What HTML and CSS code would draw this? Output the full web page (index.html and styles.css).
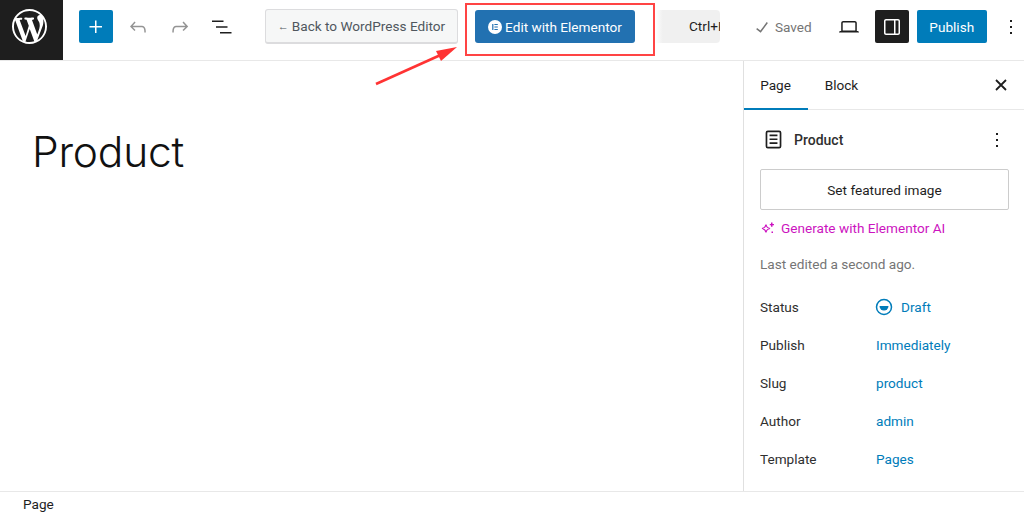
FILE: index.html
```html
<!DOCTYPE html>
<html lang="en">
<head>
<meta charset="utf-8">
<title>Product</title>
<link rel="stylesheet" href="styles.css">
</head>
<body>
<div class="app">
  <header class="topbar">
    <a class="wp-logo"><svg width="35" height="35" viewBox="0 0 20 20"><path fill="#fff" d="M20 10c0-5.51-4.49-10-10-10C4.48 0 0 4.49 0 10c0 5.52 4.48 10 10 10 5.51 0 10-4.48 10-10zM7.78 15.37L4.37 6.22c.55-.02 1.17-.08 1.17-.08.5-.06.44-1.13-.06-1.11 0 0-1.45.11-2.37.11-.18 0-.37 0-.58-.01C4.12 2.69 6.87 1.11 10 1.11c2.33 0 4.45.87 6.05 2.34-.68-.11-1.65.39-1.65 1.58 0 .74.45 1.36.9 2.1.35.61.55 1.36.55 2.46 0 1.49-1.4 5-1.4 5l-3.03-8.37c.54-.02.82-.17.82-.17.5-.05.44-1.25-.06-1.22 0 0-1.44.12-2.38.12-.87 0-2.33-.12-2.33-.12-.5-.03-.56 1.2-.06 1.22l.92.08 1.26 3.41zM17.41 10c.24-.64.74-1.87.43-4.25.7 1.29 1.05 2.71 1.05 4.25 0 3.29-1.73 6.24-4.4 7.78.97-2.59 1.94-5.2 2.92-7.78zM6.1 18.09C3.12 16.65 1.11 13.53 1.11 10c0-1.3.23-2.48.72-3.59C3.25 10.3 4.67 14.2 6.1 18.09zm4.03-6.63l2.58 6.98c-.86.29-1.76.45-2.71.45-.79 0-1.57-.11-2.29-.33.81-2.38 1.62-4.74 2.42-7.1z"/></svg></a>
    <button class="btn-add"><svg width="24" height="24" viewBox="0 0 24 24"><path fill="#fff" d="M11 12.5V18h1.5v-5.5H18V11h-5.5V5.5H11V11H5.5v1.5z"/></svg></button>
    <span class="icon-slot undo"><svg width="24" height="24" viewBox="0 0 24 24"><path fill="#949494" d="M18.3 11.7c-.6-.6-1.4-.9-2.3-.9H6.7l2.9-3.3-1.1-1-4.5 5L8.5 16l1-1-2.7-2.7H16c.5 0 .9.2 1.3.5 1 1 1 3.4 1 4.5v.3h1.5v-.2c0-1.5 0-4.3-1.5-5.7z"/></svg></span>
    <span class="icon-slot redo"><svg width="24" height="24" viewBox="0 0 24 24"><path fill="#949494" d="M15.6 6.5l-1.1 1 2.9 3.3H8c-.9 0-1.7.3-2.3.9-1.4 1.5-1.4 4.2-1.4 5.6v.2h1.5v-.3c0-1.1 0-3.5 1-4.5.3-.3.7-.5 1.3-.5h9.2L14.5 15l1.1 1.1 4.6-4.6-4.6-5z"/></svg></span>
    <span class="icon-slot list"><svg width="24" height="24" viewBox="0 0 24 24"><path fill="#1e1e1e" d="M2 5.500h11.500V7H2zM6 11.300h11.500v1.500H6zM10 17h11.500v1.500H10z"/></svg></span>
    <a class="btn-back"><span class="back-arrow">←</span>Back to WordPress Editor</a>
    <a class="btn-elementor"><svg width="14" height="14" viewBox="0 0 14 14"><circle cx="7" cy="7" r="7" fill="#fff"/><path fill="#2271b1" d="M4.200 3.900h1.200v6.200H4.200zM6.400 3.900h3.400v1.200H6.400zM6.400 6.400h3.400v1.200H6.400zM6.400 8.900h3.400v1.200H6.400z"/></svg>Edit with Elementor</a>
    <div class="shortcut"><span>Ctrl+K</span></div>
    <span class="saved"><svg width="24" height="24" viewBox="0 0 24 24"><path fill="#757575" d="M16.700 7.100l-6.300 8.500-3.300-2.500-.9 1.200 4.500 3.400L17.900 8z"/></svg>Saved</span>
    <span class="icon-slot device"><svg width="24" height="24" viewBox="0 0 24 24"><path fill="#1e1e1e" d="M20.500 16h-.7V8c0-1.100-.9-2-2-2H6.200c-1.100 0-2 .9-2 2v8h-.7c-.8 0-1.500.7-1.500 1.500h20c0-.8-.7-1.500-1.500-1.500zM5.700 8c0-.3.2-.5.5-.5h11.600c.3 0 .5.2.5.5v7.600H5.700V8z"/></svg></span>
    <button class="btn-toggle"><svg width="24" height="24" viewBox="0 0 24 24"><path fill="#fff" d="M18 4H6c-1.100 0-2 .9-2 2v12c0 1.100.9 2 2 2h12c1.100 0 2-.9 2-2V6c0-1.100-.9-2-2-2zm-4 14.500H6c-.3 0-.5-.2-.5-.5V6c0-.3.2-.5.5-.5h8v13zm4.500-.5c0 .3-.2.5-.5.5h-2.500v-13H18c.3 0 .5.2.5.500v12z"/></svg></button>
    <button class="btn-publish">Publish</button>
    <span class="icon-slot more"><svg width="24" height="24" viewBox="0 0 24 24"><path fill="#1e1e1e" d="M13 19h-2v-2h2v2zm0-6h-2v-2h2v2zm0-6h-2V5h2v2z"/></svg></span>
  </header>

  <div class="workspace">
    <main class="canvas">
      <h1 class="post-title">Product</h1>
    </main>
    <aside class="sidebar">
      <div class="tabs">
        <span class="tab is-active">Page</span>
        <span class="tab">Block</span>
        <svg class="tab-close" width="24" height="24" viewBox="0 0 24 24"><path fill="none" stroke="#1e1e1e" stroke-width="1.800" d="M7 7l10 10M17 7L7 17"/></svg>
      </div>
      <div class="panel">
        <div class="doc-row">
          <svg width="27" height="27" viewBox="0 0 24 24"><path fill="#1e1e1e" d="M15.500 7.500h-7V9h7V7.500zm-7 3.500h7v1.500h-7V11zm7 3.500h-7V16h7v-1.500z"/><path fill="#1e1e1e" fill-rule="evenodd" d="M17 4H7a2 2 0 0 0-2 2v12a2 2 0 0 0 2 2h10a2 2 0 0 0 2-2V6a2 2 0 0 0-2-2zM7 5.500h10c.3 0 .5.2.5.5v12c0 .3-.2.5-.5.5H7a.5.5 0 0 1-.5-.5V6c0-.3.2-.5.5-.5z"/></svg>
          <span class="doc-name">Product</span>
          <svg class="doc-more" width="24" height="24" viewBox="0 0 24 24"><path fill="#1e1e1e" d="M13 19h-2v-2h2v2zm0-6h-2v-2h2v2zm0-6h-2V5h2v2z"/></svg>
        </div>
        <button class="btn-featured">Set featured image</button>
        <a class="ai-link"><svg width="15" height="15" viewBox="0 0 15 15"><path fill="none" stroke="#cc14c0" stroke-width="1.200" d="M6 3.500C6.400 6 7.500 7.100 10 7.500 7.500 7.900 6.400 9 6 11.500 5.600 9 4.500 7.900 2 7.500 4.500 7.100 5.600 6 6 3.500z"/><path fill="#cc14c0" d="M11 1.500h1.500V3H14v1.200h-1.500v1.500H11V4.200H9.800V3H11zM11.500 10.500h1.500V12h-1.500z"/></svg>Generate with Elementor AI</a>
        <p class="edited">Last edited a second ago.</p>
        <dl class="meta">
          <div class="meta-row"><dt>Status</dt><dd class="status"><svg width="18" height="18" viewBox="0 0 18 18"><circle cx="9" cy="9" r="7.500" fill="none" stroke="#007cba" stroke-width="1.500"/><path fill="#007cba" d="M4.500 8h9a4.500 4.500 0 0 1-9 0z"/></svg>Draft</dd></div>
          <div class="meta-row"><dt>Publish</dt><dd>Immediately</dd></div>
          <div class="meta-row"><dt>Slug</dt><dd>product</dd></div>
          <div class="meta-row"><dt>Author</dt><dd>admin</dd></div>
          <div class="meta-row"><dt>Template</dt><dd>Pages</dd></div>
        </dl>
      </div>
    </aside>
  </div>

  <footer class="statusbar">Page</footer>

  <div class="mark-box"></div>
  <svg class="mark-arrow" width="100" height="60" viewBox="0 0 100 60"><path fill="none" stroke="#f33" stroke-width="2.600" d="M6 40L75 9"/><path fill="#f33" d="M87 3L66 7l5 10z"/></svg>
</div>
</body>
</html>
```
FILE: styles.css
```css
* { box-sizing: border-box; }
html, body { margin: 0; height: 100%; background: #fff; }
body { font-family: Roboto, "Liberation Sans", sans-serif; font-size: 13.6px; color: #1e1e1e; overflow: hidden; }
button { font: inherit; border: 0; cursor: pointer; padding: 0; }
svg { display: block; flex: none; }
.app { position: relative; display: flex; flex-direction: column; width: 1024px; height: 515px; overflow: hidden; }

.topbar { display: flex; align-items: center; height: 61px; flex: none; padding-bottom: 7px; border-bottom: 1px solid #e8e8e8; }
.wp-logo { display: flex; align-items: center; justify-content: center; align-self: flex-start; width: 63px; height: 60px; padding: 0 4px 7px 0; background: #1e1e1e; }
.btn-add { display: flex; align-items: center; justify-content: center; width: 34px; height: 33px; margin-left: 16px; background: #007cba; border-radius: 2px; }
.icon-slot { display: flex; align-items: center; justify-content: center; width: 24px; height: 24px; }
.undo { margin-left: 13px; }
.redo { margin-left: 18px; }
.list { margin-left: 18px; }
.btn-back { display: flex; align-items: center; justify-content: center; gap: 3px; width: 193px; height: 35px; margin-left: 31px; background: #f6f7f7; border: 1px solid #dcdcde; border-bottom-width: 2px; border-radius: 3px; color: #50575e; white-space: nowrap; }
.back-arrow { font-size: 11px; }
.btn-elementor { display: flex; align-items: center; justify-content: center; gap: 3px; width: 160px; height: 33px; margin-left: 17px; background: #2271b1; border-radius: 3px; color: #fff; white-space: nowrap; }
.shortcut { width: 65px; height: 33px; margin-left: 20px; padding-left: 34px; background: linear-gradient(90deg, #fff, #f0f0f0 12%); border-radius: 0 4px 4px 0; line-height: 33px; overflow: hidden; white-space: nowrap; color: #1e1e1e; }
.saved { display: flex; align-items: center; gap: 1px; margin-left: 30px; color: #757575; }
.device { margin-left: 25px; }
.btn-toggle { display: flex; align-items: center; justify-content: center; width: 34px; height: 33px; margin-left: 14px; background: #1e1e1e; border-radius: 2px; }
.btn-publish { width: 70px; height: 33px; margin-left: 8px; background: #007cba; border-radius: 2px; color: #fff; }
.more { margin-left: 12px; }

.workspace { display: flex; flex: 1; min-height: 0; }
.canvas { flex: 1; min-width: 0; padding: 66px 32px 0; }
.post-title { margin: 0; font-family: Inter, "Liberation Sans", sans-serif; font-weight: 300; font-size: 42.5px; line-height: 50px; color: #111; letter-spacing: -.2px; }

.sidebar { width: 281px; flex: none; border-left: 1px solid #e0e0e0; overflow: hidden; }
.tabs { display: flex; align-items: stretch; height: 49px; border-bottom: 1px solid #e8e8e8; }
.tab { display: flex; align-items: center; justify-content: center; width: 64px; height: 49px; margin-right: 4px; color: #1e1e1e; padding-bottom: 2px; }
.tab + .tab { width: 60px; padding-right: 1px; }
.tab.is-active { padding-right: 1px; box-shadow: inset 0 -2px 0 #007cba; }
.tab-close { margin: 12px 11px 0 auto; }
.panel { padding: 0 16px; }
.doc-row { display: flex; align-items: center; height: 59px; gap: 7px; }
.doc-name { font-size: 14px; font-weight: 500; color: #2f2f2f; }
.doc-more { margin-left: auto; margin-right: -1px; }
.btn-featured { display: block; width: 249px; height: 41px; background: #fff; border: 1px solid #ccc; border-radius: 2px; color: #1e1e1e; }
.ai-link { display: flex; align-items: center; gap: 6px; height: 20px; margin-top: 8px; color: #cc14c0; }
.edited { margin: 16px 0 0; line-height: 20px; color: #757575; }
.meta { margin: 14px 0 0; }
.meta-row { display: flex; align-items: center; height: 38px; }
.meta-row dt { width: 116px; color: #2f2f2f; }
.meta-row dd { margin: 0; color: #007cba; }
.meta-row dd.status { display: flex; align-items: center; gap: 8px; margin-left: -1px; }

.statusbar { flex: none; height: 24px; padding-left: 23px; border-top: 1px solid #e8e8e8; line-height: 25px; color: #1e1e1e; }

.mark-box { position: absolute; left: 465px; top: 3px; width: 190px; height: 53px; border: 2px solid #f44; }
.mark-arrow { position: absolute; left: 370px; top: 44px; }
```
